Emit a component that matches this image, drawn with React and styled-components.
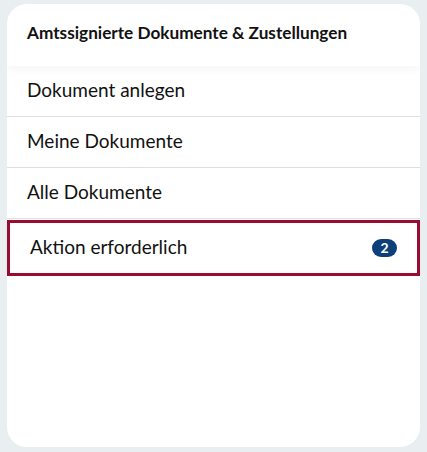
import styled, {createGlobalStyle} from "styled-components";

const GlobalStyle = createGlobalStyle`
  html, body {
    margin: 0;
    padding: 0;
    background: #e9eef1;
  }
  body {
    font-family: Lato, "Noto Sans", sans-serif;
    color: #111;
  }
`

const Page = styled.div`
  padding: 4px 7px 5px 7px;
  height: 452px;
  box-sizing: border-box;
`

const Card = styled.div`
  height: 443px;
  background: #fff;
  border-radius: 20px;
  overflow: hidden;
  display: flex;
  flex-direction: column;
`

const Header = styled.div`
  height: 62px;
  box-sizing: border-box;
  display: flex;
  align-items: center;
  padding: 0 20px 6px;
  font-size: 17.2px;
  font-weight: 700;
  position: relative;
  z-index: 1;
  box-shadow: 0 4px 8px rgba(0, 0, 0, 0.035);
`

const Menu = styled.ul`
  list-style: none;
  margin: 0;
  padding: 0;
`

const Item = styled.li`
  height: ${(p) => (p.$active ? "56px" : "51px")};
  box-sizing: border-box;
  display: flex;
  align-items: center;
  justify-content: space-between;
  padding: 0 20px 4px 20px;
  margin-top: ${(p) => (p.$active ? "1px" : "0")};
  font-size: 19px;
  border-bottom: 1px solid #dedfe0;
  border: ${(p) => (p.$active ? "3px solid #9b0a31" : undefined)};
`

const Badge = styled.span`
  min-width: 25px;
  height: 18px;
  margin-top: 3px;
  border-radius: 9px;
  background: #0d3f7d;
  color: #fff;
  font-size: 14px;
  font-weight: 700;
  display: inline-flex;
  align-items: center;
  justify-content: center;
`

const items = [
  {label: "Dokument anlegen"},
  {label: "Meine Dokumente"},
  {label: "Alle Dokumente"},
  {label: "Aktion erforderlich", count: 2, active: true},
];

export default function App() {
  return (
    <>
      <GlobalStyle />
      <Page>
        <Card>
          <Header>Amtssignierte Dokumente &amp; Zustellungen</Header>
          <Menu>
            {items.map((item) => (
              <Item key={item.label} $active={item.active}>
                <span>{item.label}</span>
                {item.count && <Badge>{item.count}</Badge>}
              </Item>
            ))}
          </Menu>
        </Card>
      </Page>
    </>
  );
}
